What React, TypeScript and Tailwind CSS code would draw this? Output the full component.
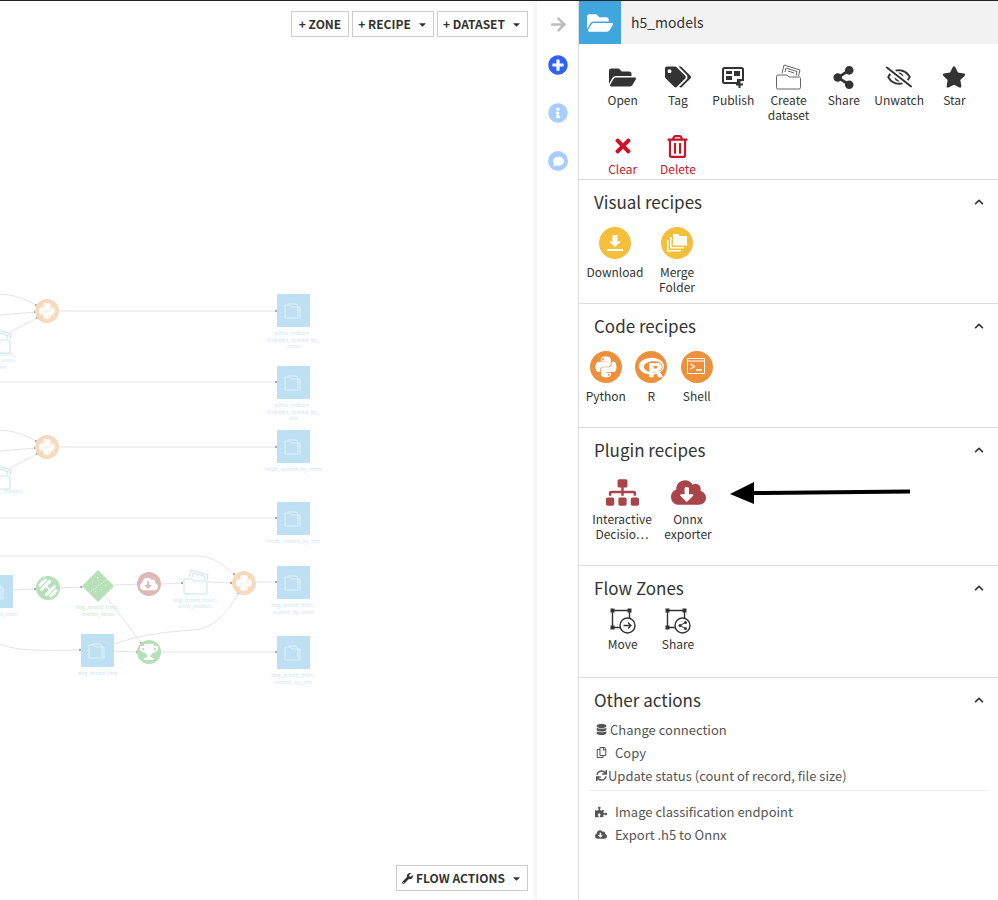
import type { ReactNode } from 'react';
import {
  FaArrowRight, FaCaretDown, FaChevronUp, FaCloudDownloadAlt, FaComment, FaDatabase, FaDumbbell,
  FaFolderOpen, FaInfoCircle, FaPlusCircle, FaPuzzlePiece, FaPython, FaRProject, FaRegCopy,
  FaRegEyeSlash, FaRegTrashAlt, FaShareAlt, FaSitemap, FaStar, FaSync, FaTags, FaTimes, FaTrophy, FaWrench,
} from 'react-icons/fa';

const FONT = '[font-family:"Noto_Sans_CJK_SC","Liberation_Sans",sans-serif]';

function PublishIcon() {
  return (
    <svg width="24" height="24" viewBox="0 0 24 24">
      <path d="M3.5 3h17a1.5 1.5 0 0 1 1.5 1.500V15h-5v3H3.500A1.500 1.500 0 0 1 2 16.500v-12A1.500 1.500 0 0 1 3.500 3z" fill="none" stroke="#333" strokeWidth="2" />
      <path d="M5 6h6v3H5zM13 6h6v5h-6zM5 11h6v4H5z" fill="#333" />
      <path d="M18.500 16v7M15 19.500h7" stroke="#333" strokeWidth="2" />
    </svg>
  );
}

function CreateDatasetIcon() {
  return (
    <svg width="26" height="26" viewBox="0 0 26 26" fill="none" stroke="#555" strokeWidth="0.9">
      <path d="M2 11h9l2 2h10.500a1.500 1.500 0 0 1 1 1.500v9a1.500 1.500 0 0 1-1.500 1.500h-21A1.500 1.500 0 0 1 .5 23.500v-11A1.500 1.500 0 0 1 2 11z" />
      <path d="M6 9.500 8 1l16 5-1.500 6" />
      <path d="M9 8 10 4l11 3.500-1 4M12 7l6 2" />
    </svg>
  );
}

function ZoneIcon({ kind }: { kind: 'move' | 'share' }) {
  return (
    <svg width="26" height="26" viewBox="0 0 26 26">
      <path d="M2.500 2.500h17v9M2.500 2.500v17h9" fill="none" stroke="#333" strokeWidth="1.400" />
      <path d="M.5 .5h4v4h-4zM17.500 .5h4v4h-4zM.5 17.500h4v4h-4z" fill="#333" />
      <circle cx="17.500" cy="17.500" r="7.500" fill="#fff" stroke="#333" strokeWidth="1.400" />
      {kind === 'move' ? (
        <path d="M13.500 17.500h7.500M18 14.500l3 3-3 3" fill="none" stroke="#333" strokeWidth="1.300" />
      ) : (
        <>
          <path d="M20.500 14.500 15 17.500l5.500 3" fill="none" stroke="#333" strokeWidth="1" />
          <circle cx="20.500" cy="14.500" r="1.500" fill="#333" />
          <circle cx="15" cy="17.500" r="1.500" fill="#333" />
          <circle cx="20.500" cy="20.500" r="1.500" fill="#333" />
        </>
      )}
    </svg>
  );
}

function DownloadGlyph() {
  return (
    <svg width="18" height="18" viewBox="0 0 18 18" fill="#fff">
      <path d="M6.500 1h5v6.500H15L9 13 3 7.500h3.500z" />
      <path d="M1 15h16v2H1z" />
    </svg>
  );
}

function MergeGlyph() {
  return (
    <svg width="22" height="20" viewBox="0 0 22 20" fill="#fff">
      <path d="M7 1h5l1.500 2H21v9.500H7z" />
      <path d="M4 4h1.500v10H18v1.500H4z" />
      <path d="M1 7h1.500v10H15v1.500H1z" />
    </svg>
  );
}

function ShellGlyph() {
  return (
    <svg width="20" height="18" viewBox="0 0 20 18" fill="none" stroke="#fff">
      <path d="M.5 .5h17v15H.5z" strokeWidth="1" />
      <path d="M1 3h16" strokeWidth="1" />
      <path d="M3.500 6 7.500 8.500 3.500 11" strokeWidth="1.200" />
      <path d="M9 12h6" strokeWidth="1.500" />
    </svg>
  );
}

function Circle({ color, children }: { color: string; children: ReactNode }) {
  return (
    <div className={`flex h-8 w-8 items-center justify-center rounded-full ${color}`}>{children}</div>
  );
}

function Item({ icon, label, width, red }: { icon: ReactNode; label: ReactNode; width: string; red?: boolean }) {
  return (
    <div className={`flex flex-col items-center text-center ${width}`}>
      <div className="flex h-[26px] items-center justify-center">{icon}</div>
      <div className={`mt-[2px] text-[12px] leading-[15px] ${red ? 'text-[#ce1329]' : 'text-[#333]'}`}>{label}</div>
    </div>
  );
}

function Recipe({ icon, label, width }: { icon: ReactNode; label: ReactNode; width: string }) {
  return (
    <div className={`flex flex-col items-center text-center ${width}`}>
      {icon}
      <div className="mt-[5px] whitespace-nowrap text-[12px] leading-[15px] text-[#333]">{label}</div>
    </div>
  );
}

function Section({ title, height, children }: { title: string; height: string; children: ReactNode }) {
  return (
    <section className={`border-b border-[#ddd] ${height}`}>
      <div className="flex h-[43px] items-center justify-between pl-[15px] pr-[14px]">
        <h3 className="text-[17px] font-normal leading-none text-[#333]">{title}</h3>
        <FaChevronUp size={10} color="#333" />
      </div>
      {children}
    </section>
  );
}

function TopButton({ children, caret, className }: { children: ReactNode; caret?: boolean; className: string }) {
  return (
    <div className={`flex h-[26px] items-center justify-center gap-[6px] border border-[#ccc] bg-white text-[12px] font-semibold text-[#333] ${className}`}>
      <span className="flex items-center gap-[3px]">{children}</span>
      {caret && <FaCaretDown size={11} color="#333" />}
    </div>
  );
}

function MenuRow({ icon, label, gap }: { icon: ReactNode; label: string; gap: string }) {
  return (
    <div className="flex h-[23px] items-center pl-[16px] text-[13px] text-[#555]">
      <div className={`flex w-[12px] justify-center ${gap}`}>{icon}</div>
      {label}
    </div>
  );
}

/* faded flow graph, nodes sit at their place on the canvas */
function FolderNode({ x, y, lines }: { x: number; y: number; lines: string[] }) {
  return (
    <g>
      <rect x={x} y={y} width="33" height="33" fill="#bfe0f3" />
      <g fill="none" stroke="#e9f5fc" strokeWidth="0.8">
        <path d={`M${x + 11} ${y + 10}h8l2 2v11`} />
        <path d={`M${x + 8} ${y + 24}h15v-11h-8l-2-2h-5z`} />
      </g>
      {lines.map((l, i) => (
        <text key={l} x={x + 16.5} y={y + 41 + i * 6.7} textAnchor="middle" fontSize="5.400" fill="#cfe6f5">{l}</text>
      ))}
    </g>
  );
}

function OpenFolder({ x, y }: { x: number; y: number }) {
  return (
    <g fill="none" stroke="#bfe0f3" strokeWidth="0.9" transform={`translate(${x} ${y})`}>
      <path d="M1 10h8l2 2h12a1 1 0 0 1 1 1v11a1 1 0 0 1-1 1H2a1 1 0 0 1-1-1z" />
      <path d="M6 8 8 1l17 5-1 5M9 8l1-4 12 3.500-1 3" />
    </g>
  );
}

function FlowNode({ x, y, color, children }: { x: number; y: number; color: string; children?: ReactNode }) {
  return (
    <g>
      <circle cx={x} cy={y} r="12" fill={color} />
      {children}
    </g>
  );
}

function FlowGraph() {
  const ports = [
    [36, 304], [35, 311], [37, 317], [276, 310], [276, 381], [36, 440], [35, 447], [37, 453], [276, 446], [276, 517],
    [35, 588], [81, 586], [182, 582], [231, 582], [234, 573], [238, 592], [276, 581], [276, 651], [80, 649], [141, 642], [137, 651],
  ];
  return (
    <svg className="absolute left-0 top-0" width="537" height="899" viewBox="0 0 537 899">
      <g fill="none" stroke="#e4e4e4" strokeWidth="1">
        <path d="M0 293c14 1 26 5 36 11M0 314l35-3M10 331l27-14M59 310h217M0 381h276" />
        <path d="M0 429c14 1 26 5 36 11M0 450l35-3M10 467l27-14M59 446h217M0 517h276" />
        <path d="M13 589l22-1M60 587l21-1M114 584l26-1M161 583l21-1M208 581l23 1M256 581h20" />
        <path d="M0 555h198c14 0 24 8 36 18M114 643c30-10 50-12 80-14 20-2 34-18 44-36" />
        <path d="M105 594l36 48M0 643c15 6 30 7 80 6M114 650l23 1M161 651h115" />
      </g>
      <g fill="#aaa">
        {ports.map(([x, y]) => <rect key={`${x}-${y}`} x={x - 1} y={y - 1} width="2" height="2" />)}
      </g>

      <FlowNode x={47} y={310} color="#f8d9bd"><FaPython x={38} y={301} size={18} color="#fff" /></FlowNode>
      <FlowNode x={47} y={446} color="#f8d9bd"><FaPython x={38} y={437} size={18} color="#fff" /></FlowNode>
      <FlowNode x={244} y={582} color="#f8d9bd"><FaPython x={235} y={573} size={18} color="#fff" /></FlowNode>
      <FlowNode x={48} y={587} color="#b5e0b8">
        <g transform="rotate(45 48 587)"><FaDumbbell x={38} y={577} size={20} color="#fff" /></g>
      </FlowNode>
      <FlowNode x={149} y={583} color="#dfb8b8"><FaCloudDownloadAlt x={140} y={574} size={18} color="#fff" /></FlowNode>
      <FlowNode x={149} y={651} color="#b5e0b8"><FaTrophy x={140} y={642} size={18} color="#fff" /></FlowNode>

      <path d="M98 569l16 16-16 16-16-16z" fill="#b5e0b8" />
      <path d="M88 592l20-14" stroke="#fff" strokeWidth="0.6" strokeDasharray="2 1" />
      <g fill="#fff">
        <rect x="92" y="580" width="1.200" height="1.200" /><rect x="97" y="576" width="1.200" height="1.200" />
        <rect x="101" y="588" width="1.200" height="1.200" /><rect x="95" y="590" width="1.200" height="1.200" />
        <rect x="105" y="584" width="1.200" height="1.200" />
      </g>

      <OpenFolder x={183} y={568} />
      <OpenFolder x={-14} y={327} />
      <OpenFolder x={-14} y={463} />

      <FolderNode x={277} y={293} lines={['pima_indians_', 'diabetes_scored_by_', 'onnx']} />
      <FolderNode x={277} y={365} lines={['pima_indians_', 'diabetes_scored_by_', 'dss']} />
      <FolderNode x={277} y={429} lines={['imdb_scored_by_onnx']} />
      <FolderNode x={277} y={501} lines={['imdb_scored_by_dss']} />
      <FolderNode x={277} y={565} lines={['dog_breed_train_', 'scored_by_onnx']} />
      <FolderNode x={277} y={635} lines={['dog_breed_train_', 'scored_by_dss']} />
      <FolderNode x={81} y={633} lines={['dog_breed_test']} />
      <FolderNode x={-20} y={574} lines={['dog_breed_train']} />

      <g fontSize="5.400" textAnchor="middle" fill="#cfe6f5">
        <text x="-3" y="355">pima_indians_</text>
        <text x="-3" y="361">diabetes_onnx_</text>
        <text x="-3" y="368">models</text>
        <text x="-3" y="492">imdb_onnx_models</text>
        <text x="195" y="601">dog_breed_train_</text>
        <text x="195" y="607">onnx_models</text>
      </g>
      <g fontSize="5.400" textAnchor="middle" fill="#c9e8cc">
        <text x="98" y="608">dog_breed_train_</text>
        <text x="98" y="615">model_keras</text>
      </g>
    </svg>
  );
}

export default function App() {
  return (
    <div className={`flex h-[900px] w-[998px] overflow-hidden border-t border-[#222] bg-white ${FONT}`}>
      {/* Flow canvas */}
      <main className="relative flex h-full w-[537px] flex-col justify-between px-[9px] pb-[9px] pt-[10px]">
        <FlowGraph />
        <div className="relative flex justify-end gap-[3px]">
          <TopButton className="w-[58px]">+ ZONE</TopButton>
          <TopButton caret className="w-[82px]">+ RECIPE</TopButton>
          <TopButton caret className="w-[91px]">+ DATASET</TopButton>
        </div>
        <div className="relative flex justify-end">
          <TopButton caret className="w-[132px]"><FaWrench size={11} color="#333" />FLOW ACTIONS</TopButton>
        </div>
      </main>

      {/* Rail */}
      <nav className="flex h-full w-[42px] flex-col items-center border-r border-[#ddd] pl-[1px] pt-[15px] shadow-[-3px_0_4px_rgba(0,0,0,0.05)]">
        <FaArrowRight size={17} color="#bdbdbd" />
        <div className="mt-[22px] flex flex-col gap-[28px]">
          <FaPlusCircle size={20} color="#2f62f5" />
          <FaInfoCircle size={20} color="#a9cdff" />
          <div className="flex h-5 w-5 items-center justify-center rounded-full bg-[#a9cdff]">
            <FaComment size={11} color="#fff" />
          </div>
        </div>
      </nav>

      {/* Right panel */}
      <aside className="h-full flex-1">
        <header className="flex h-[43px] items-center bg-[#f2f2f2]">
          <div className="flex h-[43px] w-[42px] items-center justify-center bg-[#3fa7de]">
            <FaFolderOpen size={26} color="#fff" />
          </div>
          <span className="ml-[10px] text-[14px] text-[#333]">h5_models</span>
        </header>

        <div className="h-[136px] border-b border-[#ddd] pl-[16px] pt-[20px]">
          <div className="flex flex-wrap gap-y-[11px]">
            <Item width="w-[55.300px]" icon={<FaFolderOpen size={27} color="#333" />} label="Open" />
            <Item width="w-[55.300px]" icon={<FaTags size={26} color="#333" />} label="Tag" />
            <Item width="w-[55.300px]" icon={<PublishIcon />} label="Publish" />
            <Item width="w-[55.300px]" icon={<CreateDatasetIcon />} label={<>Create<br />dataset</>} />
            <Item width="w-[55.300px]" icon={<FaShareAlt size={23} color="#333" />} label="Share" />
            <Item width="w-[55.300px]" icon={<FaRegEyeSlash size={26} color="#333" />} label="Unwatch" />
            <Item width="w-[55.300px]" icon={<FaStar size={24} color="#333" />} label="Star" />
            <div className="w-[10px]" />
            <Item red width="w-[55.300px]" icon={<FaTimes size={22} color="#ce1329" />} label="Clear" />
            <Item red width="w-[55.300px]" icon={<FaRegTrashAlt size={23} color="#ce1329" />} label="Delete" />
          </div>
        </div>

        <Section title="Visual recipes" height="h-[124px]">
          <div className="mt-[4px] flex pl-[5px]">
            <Recipe width="w-[62px]" icon={<Circle color="bg-[#f5bf3b]"><DownloadGlyph /></Circle>} label="Download" />
            <Recipe width="w-[62px]" icon={<Circle color="bg-[#f5bf3b]"><MergeGlyph /></Circle>} label={<>Merge<br />Folder</>} />
          </div>
        </Section>

        <Section title="Code recipes" height="h-[124px]">
          <div className="mt-[4px] flex pl-[4px]">
            <Recipe width="w-[45.500px]" icon={<Circle color="bg-[#ed8f3b]"><FaPython size={24} color="#fff" /></Circle>} label="Python" />
            <Recipe width="w-[45.500px]" icon={<Circle color="bg-[#ed8f3b]"><FaRProject size={25} color="#fff" /></Circle>} label="R" />
            <Recipe width="w-[45.500px]" icon={<Circle color="bg-[#ed8f3b]"><ShellGlyph /></Circle>} label="Shell" />
          </div>
        </Section>

        <div className="relative">
          <Section title="Plugin recipes" height="h-[138px]">
            <div className="mt-[7px] flex pl-[10px]">
              <Recipe width="w-[66px]" icon={<div className="flex h-[28px] items-center"><FaSitemap size={33} color="#a8444a" /></div>} label={<>Interactive<br />Decisio…</>} />
              <Recipe width="w-[66px]" icon={<div className="flex h-[28px] items-center"><FaCloudDownloadAlt size={35} color="#a8444a" /></div>} label={<>Onnx<br />exporter</>} />
            </div>
          </Section>
          {/* annotation arrow drawn over the screenshot */}
          <svg className="absolute left-[150px] top-[50px]" width="184" height="30" viewBox="0 0 184 30">
            <path d="M1 16 25 4v9l156-1.500v4L25 17v9z" fill="#000" />
          </svg>
        </div>

        <Section title="Flow Zones" height="h-[112px]">
          <div className="-mt-[1px] flex pl-[16px]">
            <Item width="w-[55.300px]" icon={<ZoneIcon kind="move" />} label="Move" />
            <Item width="w-[55.300px]" icon={<ZoneIcon kind="share" />} label="Share" />
          </div>
        </Section>

        <section>
          <div className="flex h-[43px] items-center justify-between pl-[15px] pr-[14px]">
            <h3 className="text-[17px] font-normal leading-none text-[#333]">Other actions</h3>
            <FaChevronUp size={10} color="#333" />
          </div>
          <div className="-mt-[3px]">
            <MenuRow gap="mr-[3px]" icon={<FaDatabase size={11} color="#555" />} label="Change connection" />
            <MenuRow gap="mr-[8px]" icon={<FaRegCopy size={11} color="#555" />} label="Copy" />
            <MenuRow gap="mr-[1px]" icon={<FaSync size={11} color="#555" />} label="Update status (count of record, file size)" />
          </div>
          <div className="mx-[10px] mb-[9px] mt-[3px] border-t border-[#eee]" />
          <MenuRow gap="mr-[8px]" icon={<FaPuzzlePiece size={12} color="#555" />} label="Image classification endpoint" />
          <MenuRow gap="mr-[8px]" icon={<FaCloudDownloadAlt size={13} color="#555" />} label="Export .h5 to Onnx" />
        </section>
      </aside>
    </div>
  );
}
